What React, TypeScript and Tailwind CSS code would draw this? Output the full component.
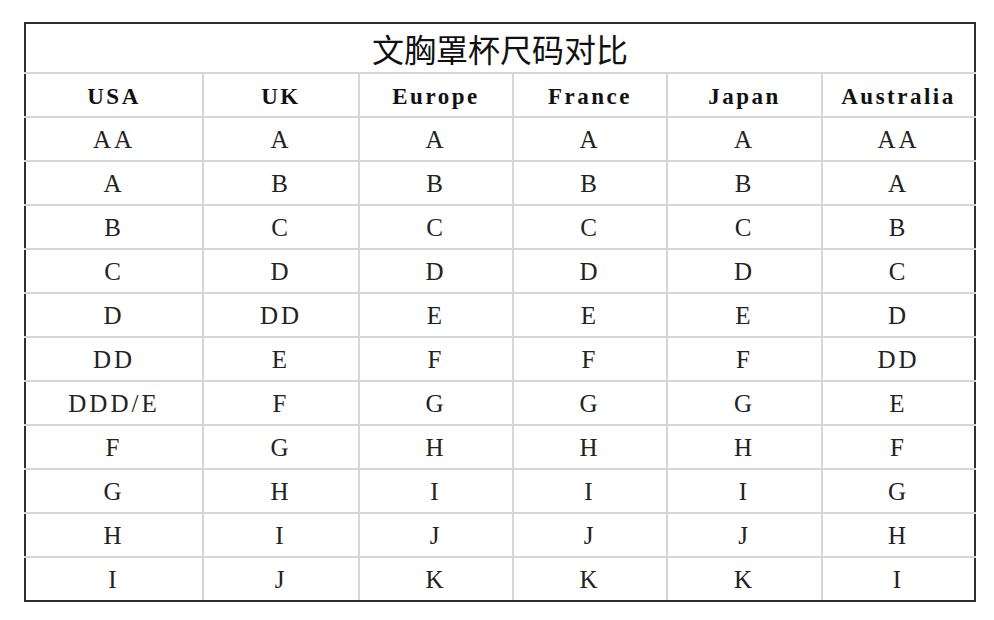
import React from 'react';

const headers = ['USA', 'UK', 'Europe', 'France', 'Japan', 'Australia'];

const rows: string[][] = [
  ['AA', 'A', 'A', 'A', 'A', 'AA'],
  ['A', 'B', 'B', 'B', 'B', 'A'],
  ['B', 'C', 'C', 'C', 'C', 'B'],
  ['C', 'D', 'D', 'D', 'D', 'C'],
  ['D', 'DD', 'E', 'E', 'E', 'D'],
  ['DD', 'E', 'F', 'F', 'F', 'DD'],
  ['DDD/E', 'F', 'G', 'G', 'G', 'E'],
  ['F', 'G', 'H', 'H', 'H', 'F'],
  ['G', 'H', 'I', 'I', 'I', 'G'],
  ['H', 'I', 'J', 'J', 'J', 'H'],
  ['I', 'J', 'K', 'K', 'K', 'I'],
];

const colWidths = ['w-[178px]', 'w-[156px]', 'w-[154px]', 'w-[154px]', 'w-[155px]', 'w-auto'];

export default function App() {
  return (
    <div className="w-[994px] h-[620px] bg-white pt-[22px] pl-[24px]">
      <table className="w-[952px] table-fixed border-collapse border-2 border-[#2e2e2e] bg-white">
        <colgroup>
          {colWidths.map((w, i) => (
            <col key={i} className={w} />
          ))}
        </colgroup>
        <thead>
          <tr className="h-[50px]">
            <th
              colSpan={6}
              className="border-2 border-[#d6d6d6] border-t-[#2e2e2e] border-x-[#2e2e2e] text-center align-middle text-[32px] font-normal leading-none text-[#111]"
              style={{ fontFamily: '"Noto Sans CJK SC", sans-serif' }}
            >
              文胸罩杯尺码对比
            </th>
          </tr>
          <tr className="h-[44px]">
            {headers.map((h, i) => (
              <th
                key={h}
                className={`border-2 border-[#d6d6d6] ${i === 0 ? 'border-l-[#2e2e2e]' : ''} ${i === 5 ? 'border-r-[#2e2e2e]' : ''} pt-[4px] text-center align-middle text-[23px] font-bold tracking-[2.5px] text-[#111]`}
                style={{ fontFamily: '"Liberation Serif", serif' }}
              >
                {h}
              </th>
            ))}
          </tr>
        </thead>
        <tbody>
          {rows.map((r, ri) => (
            <tr key={ri} className="h-[44px]">
              {r.map((c, ci) => (
                <td
                  key={ci}
                  className={`border-2 border-[#d6d6d6] ${ci === 0 ? 'border-l-[#2e2e2e]' : ''} ${ci === 5 ? 'border-r-[#2e2e2e]' : ''} ${ri === rows.length - 1 ? 'border-b-[#2e2e2e]' : ''} text-center align-middle text-[25px] leading-none text-[#222] tracking-[3px]`}
                  style={{ fontFamily: '"Liberation Serif", serif' }}
                >
                  {c}
                </td>
              ))}
            </tr>
          ))}
        </tbody>
      </table>
    </div>
  );
}
